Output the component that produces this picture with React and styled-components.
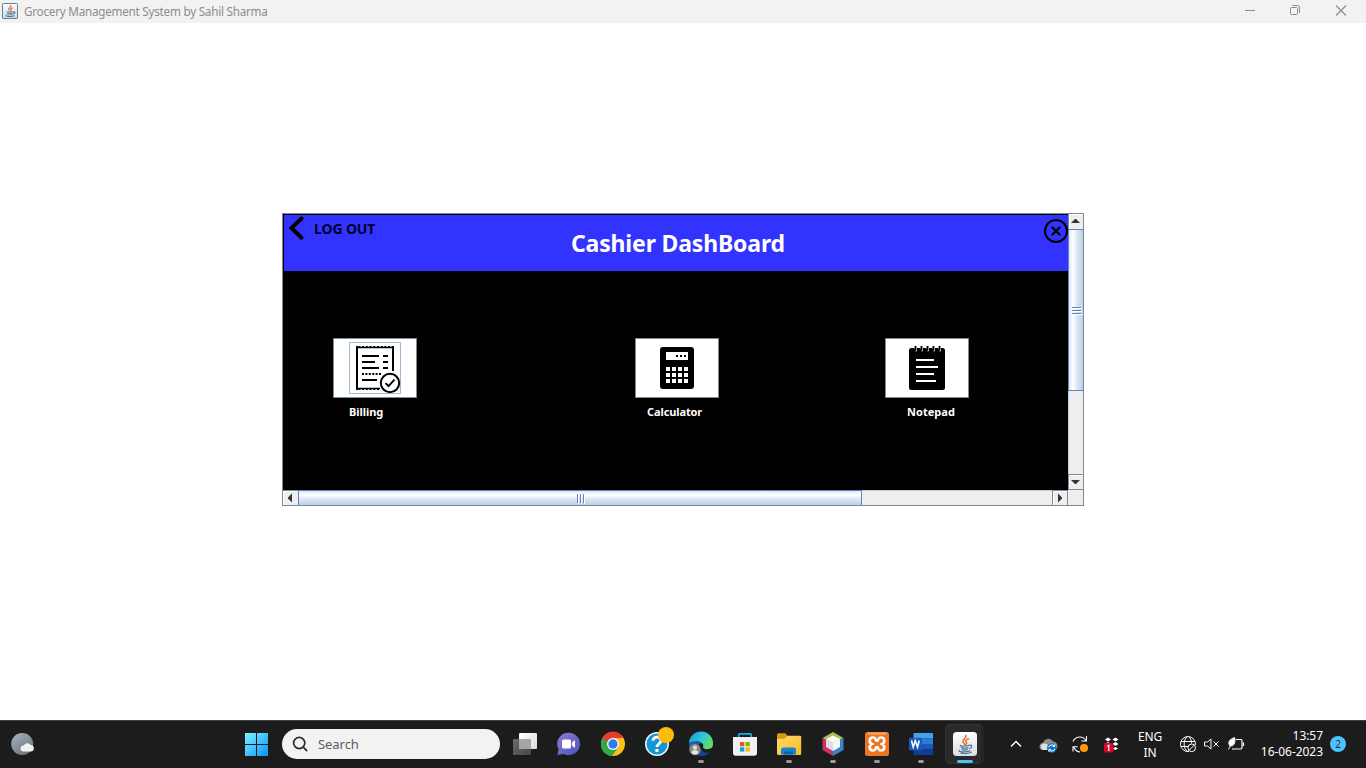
import React from "react";
import styled, { createGlobalStyle } from "styled-components";

const GlobalStyle = createGlobalStyle`
  * { box-sizing: border-box; }
  body { margin: 0; background: #fff; overflow: hidden; font-family: "Noto Sans", "Open Sans", sans-serif; }
  svg { display: block; flex: none; }
`;

const Screen = styled.div`
  width: 1366px;
  height: 768px;
  display: flex;
  flex-direction: column;
  background: #fff;
`;

/* ---------- window title bar ---------- */
const TitleBar = styled.header`
  height: 23px;
  flex: none;
  display: flex;
  align-items: center;
  padding-left: 2px;
  background: #f2f2f2;
`;
const WindowTitle = styled.h1`
  flex: 1;
  margin: 0 0 0 6px;
  font-size: 11.7px;
  line-height: 23px;
  font-weight: 400;
  letter-spacing: -0.24px;
  color: #8c8c8c;
  white-space: nowrap;
`;
const WindowControls = styled.div`
  display: flex;
  height: 23px;
`;

/* ---------- desktop area and scroll pane ---------- */
const Desktop = styled.main`
  flex: 1;
  display: flex;
  justify-content: center;
  align-items: flex-start;
  padding-top: 190px;
`;
const ScrollPane = styled.section`
  width: 802px;
  height: 293px;
  display: grid;
  grid-template-columns: 785px 15px;
  grid-template-rows: 276px 15px;
  border: 1px solid #7a8a99;
  background: #eee;
`;
const Viewport = styled.div`
  background: #000;
  padding: 1px 0 0 1px;
  overflow: hidden;
`;
const Banner = styled.div`
  height: 56px;
  display: flex;
  align-items: flex-start;
  background: #3333ff;
`;
const LogOut = styled.button`
  width: 140px;
  display: flex;
  align-items: flex-start;
  padding: 0;
  border: 0;
  background: none;
  font: 700 14px/28px "Noto Sans", sans-serif;
  letter-spacing: -0.12px;
  color: #00002b;
  white-space: nowrap;
`;
const BannerTitle = styled.h2`
  flex: 1;
  margin: 0;
  padding-left: 147px;
  font-size: 23px;
  line-height: 56px;
  font-weight: 700;
  letter-spacing: -0.17px;
  color: #fff;
  white-space: nowrap;
`;
const Tiles = styled.div`
  display: flex;
  padding: 67px 0 0 49px;
`;
const Tile = styled.div`
  width: 84px;
  margin-right: ${(p) => p.$after}px;
`;
const TileButton = styled.div`
  height: 60px;
  border: 1px solid #7a8a99;
  background: #fff;
`;
const TileLabel = styled.div`
  padding-left: ${(p) => p.$indent}px;
  font-size: 11px;
  line-height: 28px;
  font-weight: 700;
  letter-spacing: ${(p) => p.$tracking || 0}px;
  color: #fff;
  white-space: nowrap;
`;

const VBar = styled.div`
  display: flex;
  flex-direction: column;
  background: #eee;
  box-shadow: inset 1px 0 #b8cfe5;
`;
const HBar = styled.div`
  display: flex;
  background: #eee;
  box-shadow: inset 0 1px #b8cfe5;
`;
const Corner = styled.div`
  background: #eee;
`;
const Arrow = styled.div`
  flex: none;
  width: ${(p) => p.$w || 15}px;
  height: ${(p) => p.$h || 15}px;
  background: #eee;
`;
const Track = styled.div`
  flex: 1;
`;
const VThumb = styled.div`
  height: 162px;
  flex: none;
  display: flex;
  align-items: center;
  justify-content: center;
  padding: 2px 0 0 2px;
  border: 1px solid #6382bf;
  border-right: 0;
  background: linear-gradient(90deg, #dde8f3 0%, #fff 30%, #dde8f3 55%, #b8cfe5 100%);
`;
const HThumb = styled.div`
  width: 564px;
  flex: none;
  display: flex;
  align-items: center;
  justify-content: center;
  padding: 1px 0 0 2px;
  border: 1px solid #6382bf;
  border-bottom: 0;
  background: linear-gradient(180deg, #dde8f3 0%, #fff 30%, #dde8f3 55%, #b8cfe5 100%);
`;

/* ---------- taskbar ---------- */
const Taskbar = styled.footer`
  height: 48px;
  flex: none;
  display: flex;
  align-items: center;
  background: #1c1c1c;
  box-shadow: inset 0 1px #3d3f3f;
`;
const Weather = styled.div`
  width: 234px;
`;
const SearchBox = styled.div`
  width: 218px;
  height: 30px;
  margin: 0 3px 0 4px;
  display: flex;
  align-items: center;
  border-radius: 15px;
  background: #f2f2f2;
  font-size: 13px;
  letter-spacing: -0.05px;
  color: #5c5c5c;
`;
const TrayGroup = styled.div`
  display: flex;
  margin-left: 13px;
`;
const Language = styled.div`
  width: 44px;
  padding-top: 2px;
  text-align: center;
  font-size: 12px;
  line-height: 16px;
  letter-spacing: -0.2px;
  color: #fff;
`;
const Clock = styled.time`
  width: 75px;
  text-align: right;
  font-size: 12px;
  line-height: 16px;
  letter-spacing: -0.05px;
  color: #fff;
  white-space: nowrap;
`;
const Badge = styled.span`
  width: 16px;
  height: 16px;
  margin-left: 7px;
  border-radius: 50%;
  background: #4cc2ff;
  text-align: center;
  font-size: 10px;
  line-height: 16px;
  color: #17303d;
`;

const JavaCup = () => (
  <g fill="none" strokeLinecap="round">
    <path d="M12.900 3.300c1.600 2.600-4.600 4-2.600 7.200.4.700 1 1.200 1.400 1.700M15.500 6.800c-2.700 1-3.500 2.200-2.200 3.500.7.9.2 1.700-.5 2.200" stroke="#e5702a" strokeWidth="1.500" />
    <path d="M7.500 13.400c-1.600.9 6 1.100 8.500 0M8.300 15.600c1.800.7 5 .6 6.800 0M9 17.600c1.600.6 3.700.5 5.300 0M16.500 13.300c3-.7 3 2.300.2 3.200M6.500 18.600c-2.500 1 6 2.100 10.500.3M8 21.200c4 .6 8 .2 10.300-1" stroke="#4f7a9b" strokeWidth="1.250" />
  </g>
);

const Cell = ({ children, running }) => (
  <svg width="44" height="48" viewBox="0 0 44 48">
    {children}
    {running && <rect x="19" y="40" width="6" height="3" rx="1.500" fill="#9a9a9a" />}
  </svg>
);

const BillingIcon = () => (
  <svg width="82" height="58" viewBox="1 1 82 58">
    <rect x="16.500" y="4.500" width="51" height="51" fill="none" stroke="#a3b8cc" />
    <path d="M24 8v44M60 8v25" stroke="#000" strokeWidth="2" />
    <path d="M23 9.500h38M23 50.500h24" stroke="#000" strokeWidth="1.400" />
    <path d="M25.500 9h35M25.500 51h21" stroke="#000" strokeWidth="2.200" strokeDasharray="2 1.700" />
    <path d="M29 18h17M50 18h5M29 24h13M50 24h5M29 30h17M50 30h5M29 42h15" stroke="#000" strokeWidth="2" />
    <path d="M29 36h19" stroke="#000" strokeWidth="2" strokeDasharray="2 1.400" />
    <circle cx="57" cy="45" r="9.200" fill="#fff" stroke="#000" strokeWidth="2" />
    <path d="M52.500 45.200l3 3 6-6.500" fill="none" stroke="#000" strokeWidth="1.900" />
  </svg>
);

const CalculatorIcon = () => (
  <svg width="82" height="58" viewBox="1 1 82 58">
    <rect x="25" y="9" width="34" height="42" rx="3" />
    <rect x="31" y="14" width="22" height="8" fill="#fff" />
    {[41, 45, 49].map((x) => <rect key={x} x={x} y="17" width="2" height="2" />)}
    {[29, 35, 41].flatMap((y) =>
      [31, 37, 43, 49].map((x) => <rect key={`${x}-${y}`} x={x} y={y} width="4" height="4" fill="#fff" />)
    )}
  </svg>
);

const NotepadIcon = () => (
  <svg width="82" height="58" viewBox="1 1 82 58">
    <rect x="24" y="10" width="36" height="42" rx="2.500" />
    {[29, 35, 41, 47, 53].map((x) => (
      <g key={x}>
        <path d={`M${x} 9h3v3.500q-1 1.500-2 .5z`} fill="#fff" />
        <path d={`M${x + 1.5} 8v3.500l-1.500 1.500`} fill="none" stroke="#000" strokeWidth="1.900" />
      </g>
    ))}
    <path d="M31 22h18M31 29h22M31 36h18M31 43h20" stroke="#fff" strokeWidth="2" />
  </svg>
);

const TILES = [
  { name: "Billing", Icon: BillingIcon, after: 218, indent: 16, tracking: -0.05 },
  { name: "Calculator", Icon: CalculatorIcon, after: 166, indent: 12, tracking: -0.1 },
  { name: "Notepad", Icon: NotepadIcon, after: 0, indent: 22, tracking: 0.05 },
];

function Dashboard() {
  return (
    <ScrollPane>
      <Viewport>
        <Banner>
          <LogOut>
            <svg width="30" height="32" viewBox="0 0 30 32">
              <path d="M17.500 3.500L7.500 13l10 9.700" fill="none" stroke="#000" strokeWidth="4" strokeLinecap="round" />
            </svg>
            LOG OUT
          </LogOut>
          <BannerTitle>Cashier DashBoard</BannerTitle>
          <svg width="26" height="32" viewBox="0 0 26 32">
            <circle cx="14" cy="16" r="11" fill="none" stroke="#000" strokeWidth="2" />
            <path d="M10.500 12.500l7 7M17.500 12.500l-7 7" stroke="#000" strokeWidth="2.300" strokeLinecap="round" />
          </svg>
        </Banner>
        <Tiles>
          {TILES.map(({ name, Icon, after, indent, tracking }) => (
            <Tile key={name} $after={after}>
              <TileButton><Icon /></TileButton>
              <TileLabel $indent={indent} $tracking={tracking}>{name}</TileLabel>
            </Tile>
          ))}
        </Tiles>
      </Viewport>
      <VBar>
        <Arrow>
          <svg width="15" height="15"><path d="M0 .5h15M1.500 0v15" stroke="#fff" /><path d="M.5 0v15" stroke="#7a8a99" /><path d="M3 9h9l-4-4h-1z" fill="#333" /></svg>
        </Arrow>
        <VThumb>
          <svg width="10" height="8"><path d="M1 1.500h9M1 4.500h9M1 7.500h9" stroke="#fff" /><path d="M0 .5h9M0 3.500h9M0 6.500h9" stroke="#6382bf" /></svg>
        </VThumb>
        <Track />
        <Arrow $h={16}>
          <svg width="15" height="16"><path d="M0 .5h15M.5 0v16M0 15.500h15" stroke="#7a8a99" /><path d="M1 1.500h14M1.500 1v14" stroke="#fff" /><path d="M3 6h9l-4 4h-1z" fill="#333" /></svg>
        </Arrow>
      </VBar>
      <HBar>
        <Arrow>
          <svg width="15" height="15"><path d="M0 .5h15" stroke="#7a8a99" /><path d="M0 1.500h15M.5 1v15" stroke="#fff" /><path d="M9 3.500v9l-4-4v-1z" fill="#333" /></svg>
        </Arrow>
        <HThumb>
          <svg width="8" height="10"><path d="M1.500 1v9M4.500 1v9M7.500 1v9" stroke="#fff" /><path d="M.5 0v9M3.500 0v9M6.500 0v9" stroke="#6382bf" /></svg>
        </HThumb>
        <Track />
        <Arrow $w={16}>
          <svg width="16" height="15"><path d="M.5 0v15M0 .5h16" stroke="#7a8a99" /><path d="M1 1.500h14M1.500 1v15" stroke="#fff" /><path d="M15.500 0v15" stroke="#7a8a99" /><path d="M6 3.500v9l4-4v-1z" fill="#333" /></svg>
        </Arrow>
      </HBar>
      <Corner />
    </ScrollPane>
  );
}

function AppIcons() {
  return (
    <>
      <Cell>
        <defs>
          <linearGradient id="tvw" x2="1" y2="1"><stop stopColor="#fff" /><stop offset="1" stopColor="#dcdcdc" /></linearGradient>
          <linearGradient id="tvg" x2="1" y2="1"><stop stopColor="#6a6a6a" /><stop offset="1" stopColor="#484848" /></linearGradient>
        </defs>
        <rect x="10" y="19" width="18" height="16" rx="1" fill="url(#tvg)" />
        <rect x="16" y="13" width="18" height="16" rx="1" fill="url(#tvw)" />
        <path d="M16 19h12v10H16z" fill="#a5a5a5" />
      </Cell>
      <Cell>
        <defs><linearGradient id="chat" x2="1" y2="1"><stop stopColor="#8f80d0" /><stop offset="1" stopColor="#4a4fc2" /></linearGradient></defs>
        <path d="M22 12.700a11.200 11.200 0 1 1-5.200 21.200L10.300 35l1.300-5.800A11.200 11.200 0 0 1 22 12.700z" fill="url(#chat)" />
        <rect x="15" y="19.500" width="9" height="9" rx="1.500" fill="#fff" />
        <path d="M25 22.500l3-2.500v8l-3-2.500z" fill="#fff" />
      </Cell>
      <Cell>
        <circle cx="22" cy="24" r="12" fill="#fbc116" />
        <path d="M22 24L11.600 18A12 12 0 0 0 21 36l6.500-9z" fill="#2da94f" />
        <path d="M11.600 18a12 12 0 0 1 20.800 0H22l-5.200 9z" fill="#e63b2e" />
        <path d="M11.600 18l5.600 9.500L22 24l-3-5z" fill="#2da94f" />
        <path d="M14 14.500A12 12 0 0 1 32.400 18H22a6 6 0 0 0-5.500 3.500l-4.900-3.500z" fill="#e63b2e" />
        <circle cx="22" cy="24" r="6" fill="#fff" />
        <circle cx="22" cy="24" r="4.700" fill="#2f7bea" />
      </Cell>
      <Cell>
        <circle cx="22" cy="24" r="12" fill="#e9f6fb" />
        <circle cx="22" cy="24" r="10.500" fill="#1396d2" />
        <path d="M18 20.800c.2-5.200 8.500-4.700 7.900.2-.3 2.700-3.700 2.500-3.900 6" fill="none" stroke="#fff" strokeWidth="2.800" />
        <circle cx="21.900" cy="30.500" r="1.800" fill="#fff" />
        <circle cx="31" cy="15" r="8" fill="#fdbc0b" />
      </Cell>
      <Cell running>
        <defs>
          <linearGradient id="edgeA" x2="1" y2=".6"><stop stopColor="#168fd6" /><stop offset=".55" stopColor="#30c5d6" /><stop offset="1" stopColor="#65df59" /></linearGradient>
          <linearGradient id="edgeB" x2=".8" y2="1"><stop stopColor="#1b6fc0" /><stop offset="1" stopColor="#123f84" /></linearGradient>
        </defs>
        <circle cx="22" cy="24" r="12" fill="url(#edgeB)" />
        <path d="M10 23A12 12 0 0 1 34 24c0 4-3 6-7 6-3 0-5-1.300-4-3 1.500-2.700-1-6-5-6-4 0-7 1-8 2z" fill="url(#edgeA)" />
        <path d="M20 24.500c1-1.500 3-1.500 4-.5 1 1.500-.7 3 .5 4.200 2.200 1.700 6.200 1.200 9.500-1.200l.5 3.500-3.500 1.500c-4 2-10.500-.5-11-7.500z" fill="#1c1c1c" />
        <circle cx="16" cy="29.500" r="5.700" fill="#8b8885" />
        <circle cx="16" cy="27.700" r="2.100" fill="#e4e1dd" />
        <path d="M12.500 33c0-4 7-4 7 0-2 2-5 2-7 0z" fill="#e4e1dd" />
      </Cell>
      <Cell>
        <path d="M15.700 19v-4.200q0-1 1-1h10.600q1 0 1 1V19" fill="none" stroke="#19aee8" strokeWidth="1.700" />
        <path d="M10 17h24v16q0 2.700-2.700 2.700H12.700Q10 35.700 10 33z" fill="#f1f1f1" />
        <path d="M17 22h4.300v4.300H17z" fill="#f25022" /><path d="M22.500 22h4.300v4.300h-4.300z" fill="#7fba00" />
        <path d="M17 27.300h4.300v4.300H17z" fill="#00a4ef" /><path d="M22.500 27.300h4.300v4.300h-4.300z" fill="#ffb900" />
      </Cell>
      <Cell running>
        <defs><linearGradient id="fold" x2="1" y2="1"><stop stopColor="#ffdb68" /><stop offset="1" stopColor="#f6bc26" /></linearGradient></defs>
        <path d="M10 15q0-1.700 1.700-1.700h6.500l2.300 2.500-2 3H10z" fill="#d99a12" />
        <path d="M10 18.500h7.500l3-2.700H33q1.200 0 1.200 1.200v16.500q0 1.500-1.500 1.500h-21Q10 35 10 33.500z" fill="url(#fold)" />
        <path d="M14 34.500v-4.500q0-2.500 2.500-2.500h10q2.500 0 2.500 2.500v4.500z" fill="#1683d2" />
        <path d="M18 31.500h7q1 0 1 1v2h-9v-2q0-1 1-1z" fill="#0863aa" />
      </Cell>
      <Cell running>
        <path d="M22 12l10.500 6-10.500 6-10.500-6z" fill="#a9bf55" />
        <path d="M11.500 18L22 24v12l-10.500-6z" fill="#c83360" />
        <path d="M32.500 18L22 24v12l10.500-6z" fill="#3b83c8" />
        <path d="M22 15.500l7 3.500-7 4-7-4z" fill="#fbfbf8" />
        <path d="M15 19l7 4v8l-7-4z" fill="#dedde7" /><path d="M29 19l-7 4v8l7-4z" fill="#f4f7fa" />
      </Cell>
      <Cell running>
        <rect x="10" y="12" width="24" height="24" rx="2.500" fill="#ee7623" />
        <path d="M12 12.500h20l-1.500 2h-17z" fill="#f7a568" />
        <path d="M16.500 24c-3-2-2-6.500 1.200-6.500h1c2.300 0 1.500 3.500 3.300 3.500s1-3.500 3.300-3.500h1c3.200 0 4.200 4.500 1.200 6.500 3 2 2 6.500-1.200 6.500h-1c-2.300 0-1.500-3.500-3.300-3.500s-1 3.500-3.300 3.500h-1c-3.200 0-4.200-4.500-1.200-6.500z" fill="none" stroke="#fff" strokeWidth="2.600" />
        <path d="M16 24h3M25 24h3" stroke="#fff" strokeWidth="1.400" />
      </Cell>
      <Cell running>
        <path d="M15.500 13H33q1 0 1 1v4.500H14.500V14q0-1 1-1z" fill="#41a5ee" />
        <path d="M14.500 18.500H34V24H14.500z" fill="#2b7cd3" />
        <path d="M14.500 24H34v5.500H14.500z" fill="#185abd" />
        <path d="M14.500 29.500H34V34q0 1-1 1H15.500q-1 0-1-1z" fill="#103f91" />
        <rect x="10" y="17.700" width="13" height="12.500" rx="1" fill="#185abd" />
        <path d="M12.500 20.500l1.700 6.500 2.100-6.200 2.200 6.200 1.700-6.500" fill="none" stroke="#fff" strokeWidth="1.600" />
      </Cell>
      <Cell>
        <rect x="5.500" y="4.500" width="34.500" height="39" rx="4" fill="#222" stroke="#2d2d2d" />
        <rect x="2.500" y="4.500" width="34.500" height="39" rx="4" fill="#2a2a2a" stroke="#333" />
        <defs><linearGradient id="javabg" x2="0" y2="1"><stop stopColor="#fff" /><stop offset="1" stopColor="#d9dee2" /></linearGradient></defs>
        <rect x="10" y="12" width="24" height="24" rx="3.500" fill="url(#javabg)" />
        <g transform="translate(10 12)"><JavaCup /></g>
        <rect x="14" y="40" width="16" height="3" rx="1.500" fill="#4cc2ff" />
      </Cell>
    </>
  );
}

export default function App() {
  return (
    <Screen>
      <GlobalStyle />
      <TitleBar>
        <svg width="16" height="17" viewBox="0 0 16 17">
          <defs><linearGradient id="titlebg" x2="0" y2="1"><stop stopColor="#fff" /><stop offset="1" stopColor="#cbd8e3" /></linearGradient></defs>
          <rect x=".5" y=".5" width="15" height="15" rx=".7" fill="url(#titlebg)" stroke="#5f8096" />
          <g fill="none" strokeLinecap="round">
            <path d="M8.500 2.500c1 1.800-3 2.600-1.700 4.500M10.300 4.800c-1.800.7-2 1.500-1.200 2.600" stroke="#e5702a" strokeWidth="1.300" />
            <path d="M5 9h5.700M5.600 10.900h4.700M11.500 8.800c2-.3 1.700 1.500.2 2M4 12.700c1.500.9 6 .9 8 0" stroke="#44718f" strokeWidth="1.100" />
          </g>
        </svg>
        <WindowTitle>Grocery Management System by Sahil Sharma</WindowTitle>
        <WindowControls>
          <svg width="132" height="23" viewBox="0 0 132 23" fill="none" stroke="#8b8b8b">
            <path d="M11 10.500h10" />
            <rect x="56.500" y="7.500" width="7" height="7" rx="1" />
            <path d="M58.500 5.500h5q2 0 2 2v5.500" />
            <path d="M102 5.500l10 10M112 5.500l-10 10" strokeWidth="1.100" />
          </svg>
        </WindowControls>
      </TitleBar>
      <Desktop>
        <Dashboard />
      </Desktop>
      <Taskbar>
        <Weather>
          <svg width="44" height="48">
            <defs><linearGradient id="moon" x2=".7" y2="1"><stop stopColor="#a9b4be" /><stop offset="1" stopColor="#6c7680" /></linearGradient></defs>
            <circle cx="22.200" cy="24" r="11" fill="url(#moon)" />
            <path d="M23.500 31.500a3 3 0 0 1 .2-6 4 4 0 0 1 7-.5 3.300 3.300 0 0 1 .6 6.500z" fill="#eff1f3" />
          </svg>
        </Weather>
        <svg width="44" height="48">
          <defs><linearGradient id="win" gradientUnits="userSpaceOnUse" x1="11" y1="13" x2="34" y2="36"><stop stopColor="#7df1ff" /><stop offset="1" stopColor="#0a92f8" /></linearGradient></defs>
          <path d="M11 13h11v11H11zM23 13h11v11H23zM11 25h11v11H11zM23 25h11v11H23z" fill="url(#win)" />
        </svg>
        <SearchBox>
          <svg width="36" height="30" fill="none" stroke="#2b2b2b" strokeWidth="1.700" strokeLinecap="round">
            <circle cx="17.200" cy="14" r="5.600" /><path d="M21.300 18.200l3.400 3.400" />
          </svg>
          Search
        </SearchBox>
        <AppIcons />
        <TrayGroup>
          <svg width="32" height="48"><path d="M11 26.500l5-5 5 5" fill="none" stroke="#fff" strokeWidth="1.400" /></svg>
          <svg width="32" height="48">
            <path d="M11 30a3.500 3.500 0 0 1 0-7 5.500 5.500 0 0 1 10-1.500 4.500 4.500 0 0 1 2 8.500z" fill="#8e8e8e" />
            <path d="M11 30a3.500 3.500 0 0 1 0-6.500c3-.5 5 1 7 3v3.500z" fill="#e0e0e0" />
            <circle cx="19.800" cy="28" r="4.800" fill="#1672cf" />
            <path d="M16.800 27.200a3.200 3.200 0 0 1 5.500-1.200M22.800 28.800a3.200 3.200 0 0 1-5.500 1.200M22.700 24.300v2.200h-2M16.900 31.700v-2.200h2" fill="none" stroke="#fff" strokeWidth="1" />
          </svg>
          <svg width="32" height="48">
            <path d="M9 21.500a7.300 7.300 0 0 1 13-1M22.500 16v5h-5M9 31.500v-4.700h4.700M10 27.500q2 4.200 6 4.500" fill="none" stroke="#fff" strokeWidth="1.100" />
            <circle cx="20" cy="28" r="4" fill="#ff9b0a" />
          </svg>
          <svg width="32" height="48">
            <path d="M9 19.500l3-1.900 3 1.900-3 1.900zM16.500 19.500l3-1.900 3 1.900-3 1.900zM9 24l3-1.900 3 1.900-3 1.900zM16.500 24l3-1.900 3 1.900-3 1.900zM16.500 28.500l3-1.500 2.500 1.500-2.500 1.500z" fill="#fff" />
            <rect x="8" y="23" width="9.500" height="9.500" rx="2" fill="#d3082c" />
            <path d="M11.300 26.300l1.500-1v5.700" fill="none" stroke="#fff" strokeWidth="1.200" />
          </svg>
        </TrayGroup>
        <Language>ENG<br />IN</Language>
        <svg width="76" height="48" viewBox="1172 720 76 48" fill="none" stroke="#fff">
          <path d="M1189 751.500a7.500 7.500 0 1 1 6.400-6.500M1187.500 751.500c-4.500-3-4.500-12 0-15M1188.500 736.500c2 1.500 3 4 3.200 7M1181 741.500h14M1181 746.500h7" strokeWidth="1" />
          <circle cx="1191.700" cy="747.800" r="3.800" /><path d="M1189.200 750.200l5-5" />
          <path d="M1204.500 742h3l3.500-3v10l-3.500-3h-3zM1213.500 741.500l5 5M1218.500 741.500l-5 5" />
          <path d="M1236 739.500h4.500q1.500 0 1.500 1.500v6.500q0 1.500-1.500 1.500h-8.500M1243.500 742.500v3.500" strokeWidth="1.200" />
          <path d="M1230 746c-3-4 0-7 4.700-8.500 1 5-.5 9-4.700 8.500zM1228.500 749.500q1-3 3.500-6" fill="#fff" strokeWidth=".8" />
        </svg>
        <Clock>13:57<br />16-06-2023</Clock>
        <Badge>2</Badge>
      </Taskbar>
    </Screen>
  );
}
